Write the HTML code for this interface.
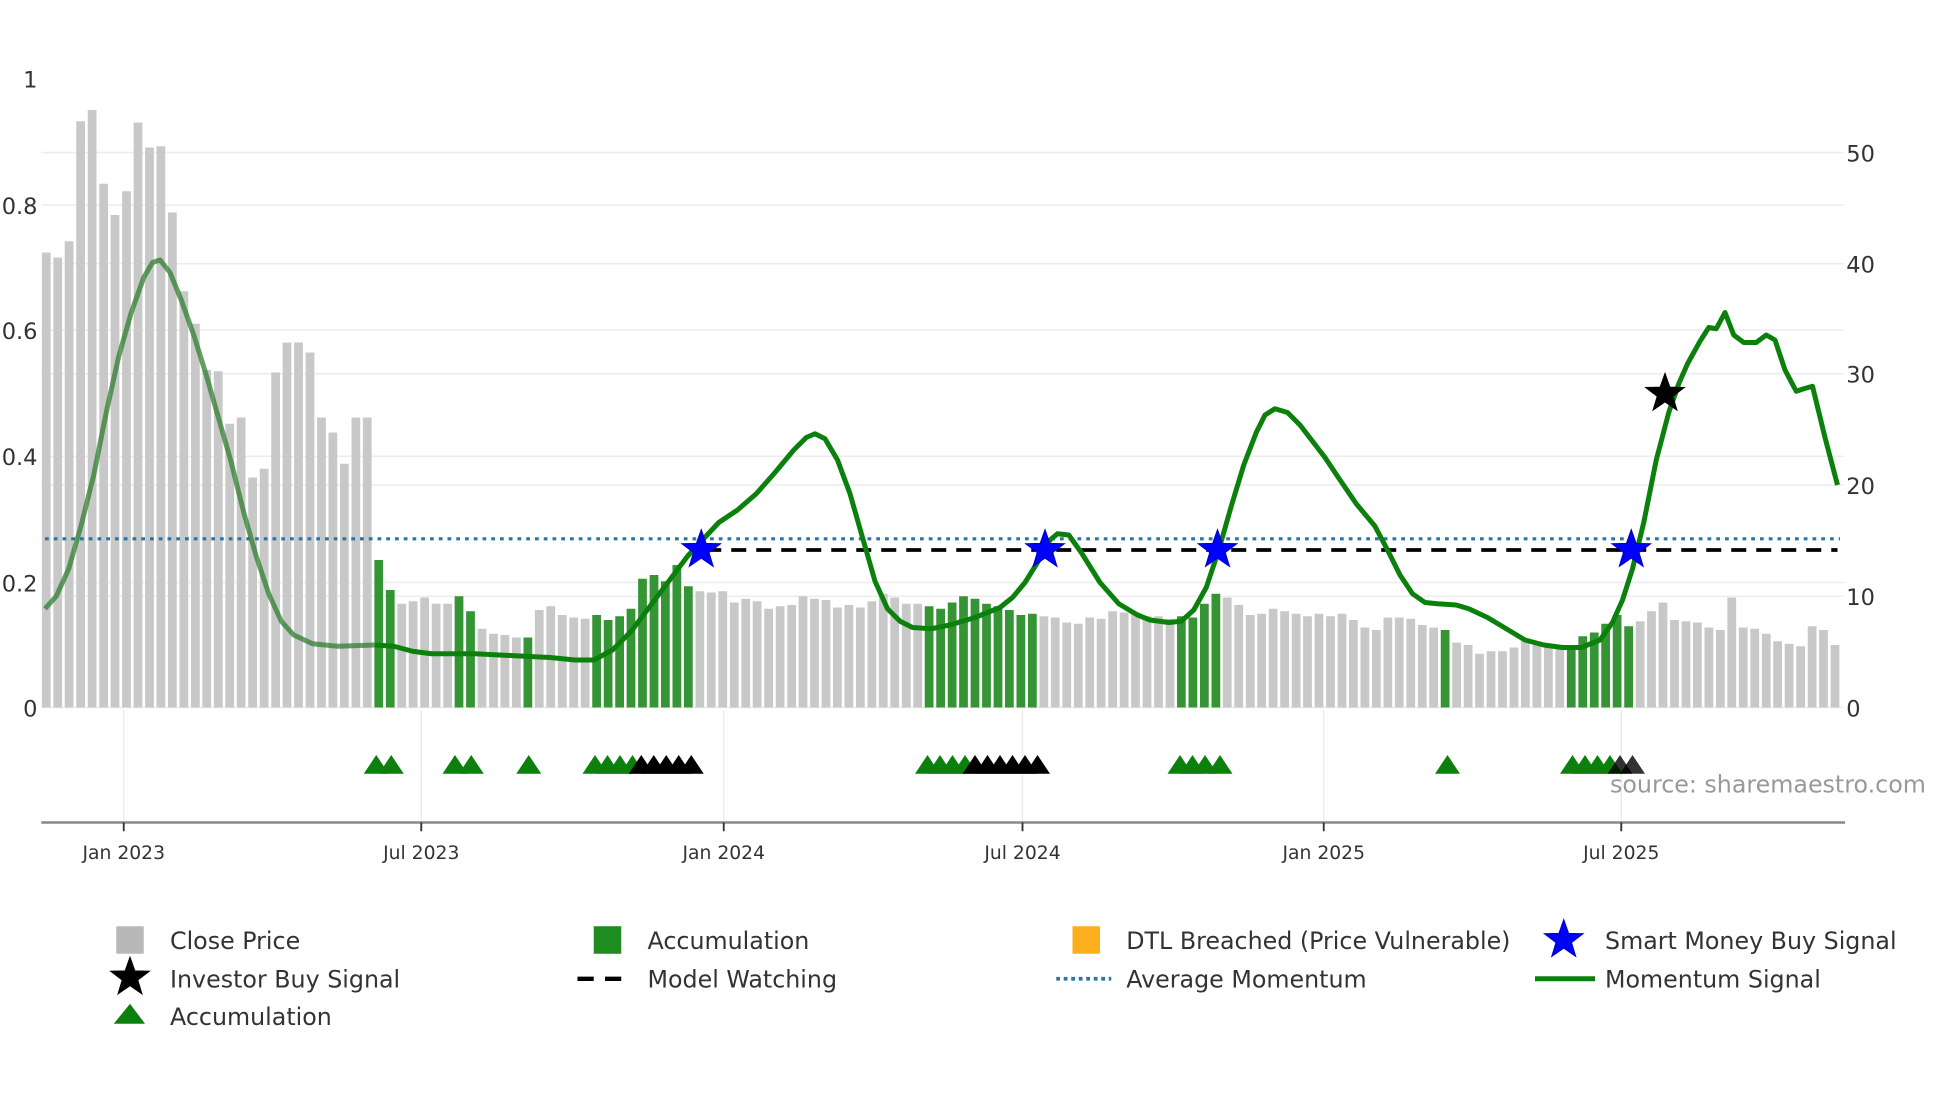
<!DOCTYPE html>
<html><head><meta charset="utf-8"><style>
html,body{margin:0;padding:0;background:#fff;}
svg{display:block;}
text{font-family:"DejaVu Sans","Liberation Sans",sans-serif;}
</style></head><body>
<svg id="s" width="1960" height="1102" viewBox="0 0 1568 881.6" xmlns="http://www.w3.org/2000/svg">
<g stroke="#ececec" stroke-width="1.2">
<line x1="33" x2="1475" y1="122" y2="122"/><line x1="33" x2="1475" y1="164" y2="164"/>
<line x1="33" x2="1475" y1="211" y2="211"/><line x1="33" x2="1475" y1="264" y2="264"/>
<line x1="33" x2="1475" y1="299" y2="299"/><line x1="33" x2="1475" y1="365" y2="365"/>
<line x1="33" x2="1475" y1="388" y2="388"/><line x1="33" x2="1475" y1="466" y2="466"/>
<line x1="33" x2="1475" y1="477" y2="477"/><line x1="33" x2="1475" y1="566" y2="566"/>
<line x1="99" x2="99" y1="568" y2="658"/><line x1="337" x2="337" y1="568" y2="658"/>
<line x1="579" x2="579" y1="568" y2="658"/><line x1="818" x2="818" y1="568" y2="658"/>
<line x1="1059" x2="1059" y1="568" y2="658"/><line x1="1297" x2="1297" y1="568" y2="658"/>
</g>
<g id="bars"></g>
<line x1="36" x2="1472" y1="431" y2="431" stroke="#2b74a8" stroke-width="2.5" stroke-dasharray="3,4"/>
<line x1="565" x2="1470" y1="440" y2="440" stroke="#000" stroke-width="3" stroke-dasharray="12,8"/>
<path id="mom" fill="none" stroke="#0c800c" stroke-width="4" stroke-linejoin="round"/>
<path id="mom0" fill="none" stroke="#2f7f2f" stroke-opacity="0.75" stroke-width="4" stroke-linejoin="round"/>
<g id="stars"></g>
<g id="tris"></g>
<line x1="33" x2="1476" y1="658" y2="658" stroke="#888" stroke-width="2"/>
<g stroke="#333" stroke-width="1.5">
<line x1="99" x2="99" y1="658" y2="665"/><line x1="337" x2="337" y1="658" y2="665"/>
<line x1="579" x2="579" y1="658" y2="665"/><line x1="818" x2="818" y1="658" y2="665"/>
<line x1="1059" x2="1059" y1="658" y2="665"/><line x1="1297" x2="1297" y1="658" y2="665"/>
</g>
<g font-size="15" fill="#333" text-anchor="middle">
<text x="99" y="687">Jan 2023</text><text x="337" y="687">Jul 2023</text>
<text x="579" y="687">Jan 2024</text><text x="818" y="687">Jul 2024</text>
<text x="1059" y="687">Jan 2025</text><text x="1297" y="687">Jul 2025</text>
</g>
<g font-size="18" fill="#333" text-anchor="end">
<text x="30" y="70">1</text><text x="30" y="171">0.8</text><text x="30" y="271">0.6</text>
<text x="30" y="372">0.4</text><text x="30" y="473">0.2</text><text x="30" y="573">0</text>
</g>
<g font-size="18" fill="#333">
<text x="1477" y="129">50</text><text x="1477" y="218">40</text><text x="1477" y="306">30</text>
<text x="1477" y="395">20</text><text x="1477" y="484">10</text><text x="1477" y="573">0</text>
</g>
<text x="1288" y="634" font-size="19" fill="#999">source: sharemaestro.com</text>
<g font-size="19" fill="#333">
<rect x="93" y="741" width="22" height="22" fill="#b8b8b8"/><text x="136" y="759">Close Price</text>
<rect x="475" y="741" width="22" height="22" fill="#1e8c1e"/><text x="518" y="759">Accumulation</text>
<rect x="858" y="741" width="22" height="22" fill="#fbae1e"/><text x="901" y="759">DTL Breached (Price Vulnerable)</text>
<text x="1284" y="759">Smart Money Buy Signal</text>
<text x="136" y="790">Investor Buy Signal</text>
<line x1="462" x2="506" y1="783" y2="783" stroke="#000" stroke-width="3.5" stroke-dasharray="13,9"/><text x="518" y="790">Model Watching</text>
<line x1="845" x2="889" y1="783" y2="783" stroke="#2b74a8" stroke-width="3" stroke-dasharray="3,3"/><text x="901" y="790">Average Momentum</text>
<line x1="1228" x2="1276" y1="783" y2="783" stroke="#0c800c" stroke-width="4"/><text x="1284" y="790">Momentum Signal</text>
<polygon points="104,803 116,819 91,819" fill="#0c800c"/><text x="136" y="820">Accumulation</text>
</g>
<g id="legstars"></g>
</svg>
<script>
var NS="http://www.w3.org/2000/svg";
function el(t,a,p){var e=document.createElementNS(NS,t);for(var k in a)e.setAttribute(k,a[k]);document.getElementById(p).appendChild(e);return e;}
var bars=[202,206,193,97,88,147,172,153,98,118,117,170,233,259,296,297,339,334,382,375,298,274,274,282,334,346,371,334,334,
'g448','g472',483,481,478,483,483,'g477','g489',503,507,508,510,'g510',488,485,492,494,495,
'g492','g496','g493','g487','g463','g460','g465','g452','g469',473,474,473,482,479,481,487,485,484,477,479,480,486,484,486,481,475,478,483,483,
'g485','g487','g482','g477','g479','g483','g485','g488','g492','g491',493,494,498,499,494,495,489,490,490,493,493,495,
'g493','g494','g483','g475',478,484,492,491,487,489,491,493,491,493,491,496,502,504,494,494,495,500,502,
'g504',514,516,523,521,521,518,513,514,516,519,'g519','g509','g506','g499','g492','g501',
497,489,482,496,497,498,502,504,478,502,503,507,513,515,517,501,504,516];
var n=bars.length,x0=37,x1=1468,st=(x1-x0)/(n-1);
for(var i=0;i<n;i++){var v=bars[i],g=false;if(typeof v=="string"){g=true;v=+v.slice(1);}
el("rect",{x:(x0+i*st-3.5).toFixed(1),y:v,width:7,height:566-v,fill:g?"#2a8f2a":"#c8c8c8","fill-opacity":g?0.95:1},"bars");}
var P=[[36,487],[45,477],[55,455],[65,420],[75,380],[85,330],[95,285],[105,250],[115,222],[122,210],[128,208],[136,218],[145,240],[155,268],[165,300],[175,335],[185,370],[195,410],[205,445],[215,475],[225,497],[235,508],[250,515],[270,517],[300,516],[315,517],[330,521],[345,523],[380,523],[420,525],[440,526],[460,528],[475,528],[490,520],[505,505],[520,485],[535,465],[550,445],[562,432],[575,418],[590,408],[605,395],[620,378],[635,360],[645,350],[652,347],[660,351],[670,368],[680,395],[690,430],[700,465],[710,487],[720,497],[730,502],[745,503],[760,500],[780,494],[800,486],[810,478],[820,466],[830,450],[840,432],[846,427],[855,428],[865,442],[880,466],[895,483],[910,492],[920,496],[935,498],[945,497],[955,488],[965,470],[975,440],[985,405],[995,372],[1005,346],[1012,332],[1020,327],[1030,330],[1040,340],[1050,353],[1060,366],[1070,381],[1085,403],[1100,421],[1110,440],[1120,460],[1130,475],[1140,482],[1150,483],[1165,484],[1175,487],[1190,494],[1205,503],[1220,512],[1235,516],[1250,518],[1265,518],[1280,512],[1290,498],[1298,480],[1306,455],[1315,418],[1325,368],[1335,330],[1343,307],[1350,291],[1360,273],[1367,262],[1373,263],[1380,250],[1387,268],[1395,274],[1405,274],[1413,268],[1420,272],[1428,296],[1437,313],[1443,311],[1450,309],[1460,350],[1470,388]];
var d1="",d0="";
for(var i=0;i<P.length;i++){var p=P[i];if(p[0]<=300)d0+=(d0?"L":"M")+p[0]+","+p[1];if(p[0]>=300)d1+=(d1?"L":"M")+p[0]+","+p[1];}
document.getElementById("mom").setAttribute("d",d1);document.getElementById("mom0").setAttribute("d",d0);
function star(cx,cy,R,fill,par){var s="";for(var k=0;k<10;k++){var r=k%2?R*0.4:R,a=-Math.PI/2+k*Math.PI/5;s+=(cx+r*Math.cos(a)).toFixed(1)+","+(cy+r*Math.sin(a)).toFixed(1)+" ";}
el("polygon",{points:s,fill:fill,stroke:fill=="#0000ff"?"#0000cc":"#000","stroke-width":1},par);}
[[561,440],[836,440],[974,440],[1305,440]].forEach(function(q){star(q[0],q[1],16,"#0000ff","stars");});
star(1332,315,16,"#000","stars");
star(1251,752,16,"#0000ff","legstars");star(104,782,16,"#000","legstars");
function tri(x,c,op){el("polygon",{points:(x-10)+",619 "+x+",604 "+(x+10)+",619",fill:c,"fill-opacity":op||1},"tris");}
[301,313,364,377,423,476,486,496,506].forEach(function(x){tri(x,"#0c800c");});
[513,523,533,543,553].forEach(function(x){tri(x,"#000");});
[742,752,762,772].forEach(function(x){tri(x,"#0c800c");});
[780,790,800,810,820,830].forEach(function(x){tri(x,"#000");});
[944,954,964,976,1158,1258,1268,1278,1288].forEach(function(x){tri(x,"#0c800c");});
[1296,1306].forEach(function(x){tri(x,"#000",0.8);});
</script>
</body></html>
